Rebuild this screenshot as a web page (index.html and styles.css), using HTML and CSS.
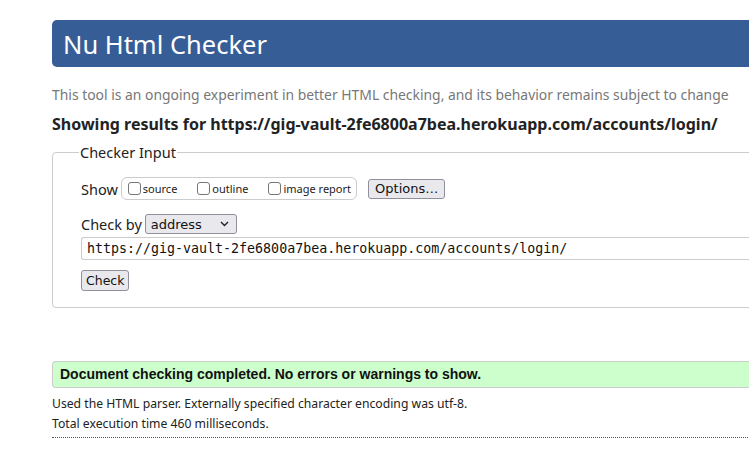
FILE: index.html
```html
<!DOCTYPE html>
<html>
<head>
<meta charset="utf-8">
<title>Nu Html Checker</title>
<link rel="stylesheet" href="styles.css">
</head>
<body>
<div class="page">
  <h1 class="title">Nu Html Checker</h1>
  <p class="tagline">This tool is an ongoing experiment in better HTML checking, and its behavior remains subject to change</p>
  <p class="results">Showing results for https://gig-vault-2fe6800a7bea.herokuapp.com/accounts/login/</p>
  <fieldset class="input-box">
    <legend class="legend">Checker Input</legend>
    <div class="row show-row">
      <span class="label">Show</span>
      <span class="opts">
        <label class="opt"><span class="cb"></span>source</label>
        <label class="opt"><span class="cb"></span>outline</label>
        <label class="opt"><span class="cb"></span>image report</label>
      </span>
      <span class="btn options">Options…</span>
    </div>
    <div class="row by-row">
      <span class="label">Check by</span>
      <span class="select">address<svg class="chev" width="9" height="6" viewBox="0 0 9 6"><path d="M1 1l3.5 3.5L8 1" fill="none" stroke="#222" stroke-width="1.4"/></svg></span>
    </div>
    <div class="url">https://gig-vault-2fe6800a7bea.herokuapp.com/accounts/login/</div>
    <div class="row check-row"><span class="btn check">Check</span></div>
  </fieldset>
  <div class="success">Document checking completed. No errors or warnings to show.</div>
  <p class="meta">Used the HTML parser. Externally specified character encoding was utf-8.</p>
  <p class="meta">Total execution time 460 milliseconds.</p>
  <div class="dots"></div>
</div>
</body>
</html>
```
FILE: styles.css
```css
html, body {
  margin: 0;
  padding: 0;
  background: #fff;
  overflow: hidden;
}
body {
  font-family: "Noto Sans", "Open Sans", sans-serif;
  color: #222;
}
.page {
  margin-left: 52px;
  width: 760px;
  padding-top: 20px;
}
.title {
  margin: 0;
  height: 47px;
  box-sizing: border-box;
  background: #365d95;
  color: #fff;
  font-weight: normal;
  font-size: 25.5px;
  line-height: 49px;
  padding-left: 11px;
  border-radius: 5px 0 0 5px;
}
.tagline {
  margin: 18px 0 0;
  font-size: 13.9px;
  line-height: 20px;
  color: #777;
}
.results {
  margin: 8px 0 0;
  font-size: 16px;
  font-weight: bold;
  line-height: 22px;
  color: #222;
}
.input-box {
  margin: 7px 0 0;
  border: 1px solid #ccc;
  border-radius: 4px;
  padding: 3px 0 16px 28px;
  min-width: 0;
}
.legend {
  font-size: 14.5px;
  padding: 0 1px;
  margin-left: -2px;
  color: #222;
}
.row {
  display: flex;
  align-items: center;
  margin-top: 10px;
}
.show-row {
  margin-top: 12px;
}
.label {
  font-size: 14.5px;
  margin-right: 3px;
}
.opts {
  display: flex;
  align-items: center;
  gap: 20px;
  border: 1px solid #ccc;
  border-radius: 6px;
  height: 21px;
  padding: 0 5px 0 6px;
  margin-right: 11px;
  font-size: 11px;
}
.opt {
  display: flex;
  align-items: center;
}
.cb {
  width: 13px;
  height: 13px;
  box-sizing: border-box;
  border: 1px solid #767676;
  border-radius: 3px;
  margin-right: 2px;
  background: #fff;
}
.btn {
  display: inline-block;
  background: #e9e9ed;
  border: 1px solid #8f8f9d;
  border-radius: 3px;
  font-family: "DejaVu Sans", sans-serif;
  font-size: 13px;
  line-height: 18px;
  padding: 0 6px;
  color: #111;
}
.options {
  padding: 0 6px;
}
.by-row {
  margin-top: 14px;
}
.select {
  display: inline-flex;
  align-items: center;
  justify-content: space-between;
  box-sizing: border-box;
  width: 92px;
  height: 20px;
  background: #e9e9ed;
  border: 1px solid #8f8f9d;
  border-radius: 3px;
  font-family: "DejaVu Sans", sans-serif;
  font-size: 13px;
  padding: 0 7px 0 5px;
  color: #111;
}
.url {
  margin-top: 3px;
  height: 23px;
  box-sizing: border-box;
  border: 1px solid #ccc;
  border-right: none;
  border-radius: 3px 0 0 3px;
  font-family: "DejaVu Sans Mono", monospace;
  font-size: 13.3px;
  line-height: 21px;
  padding-left: 5px;
  color: #111;
}
.check-row {
  margin-top: 10px;
}
.check {
  font-size: 12.5px;
  line-height: 19px;
  padding: 0 4px;
}
.success {
  margin-top: 53px;
  background: #ccffcc;
  border: 1px solid #ccc;
  border-right: none;
  border-radius: 4px 0 0 4px;
  font-family: "Liberation Sans", Arial, sans-serif;
  font-weight: bold;
  font-size: 14px;
  line-height: 25px;
  padding-left: 7px;
  color: #111;
}
.meta {
  margin: 0;
  font-size: 12.2px;
  line-height: 20px;
  color: #222;
}
.success + .meta {
  margin-top: 6px;
}
.dots {
  margin-top: 3px;
  border-top: 1px dotted #555;
}
```
